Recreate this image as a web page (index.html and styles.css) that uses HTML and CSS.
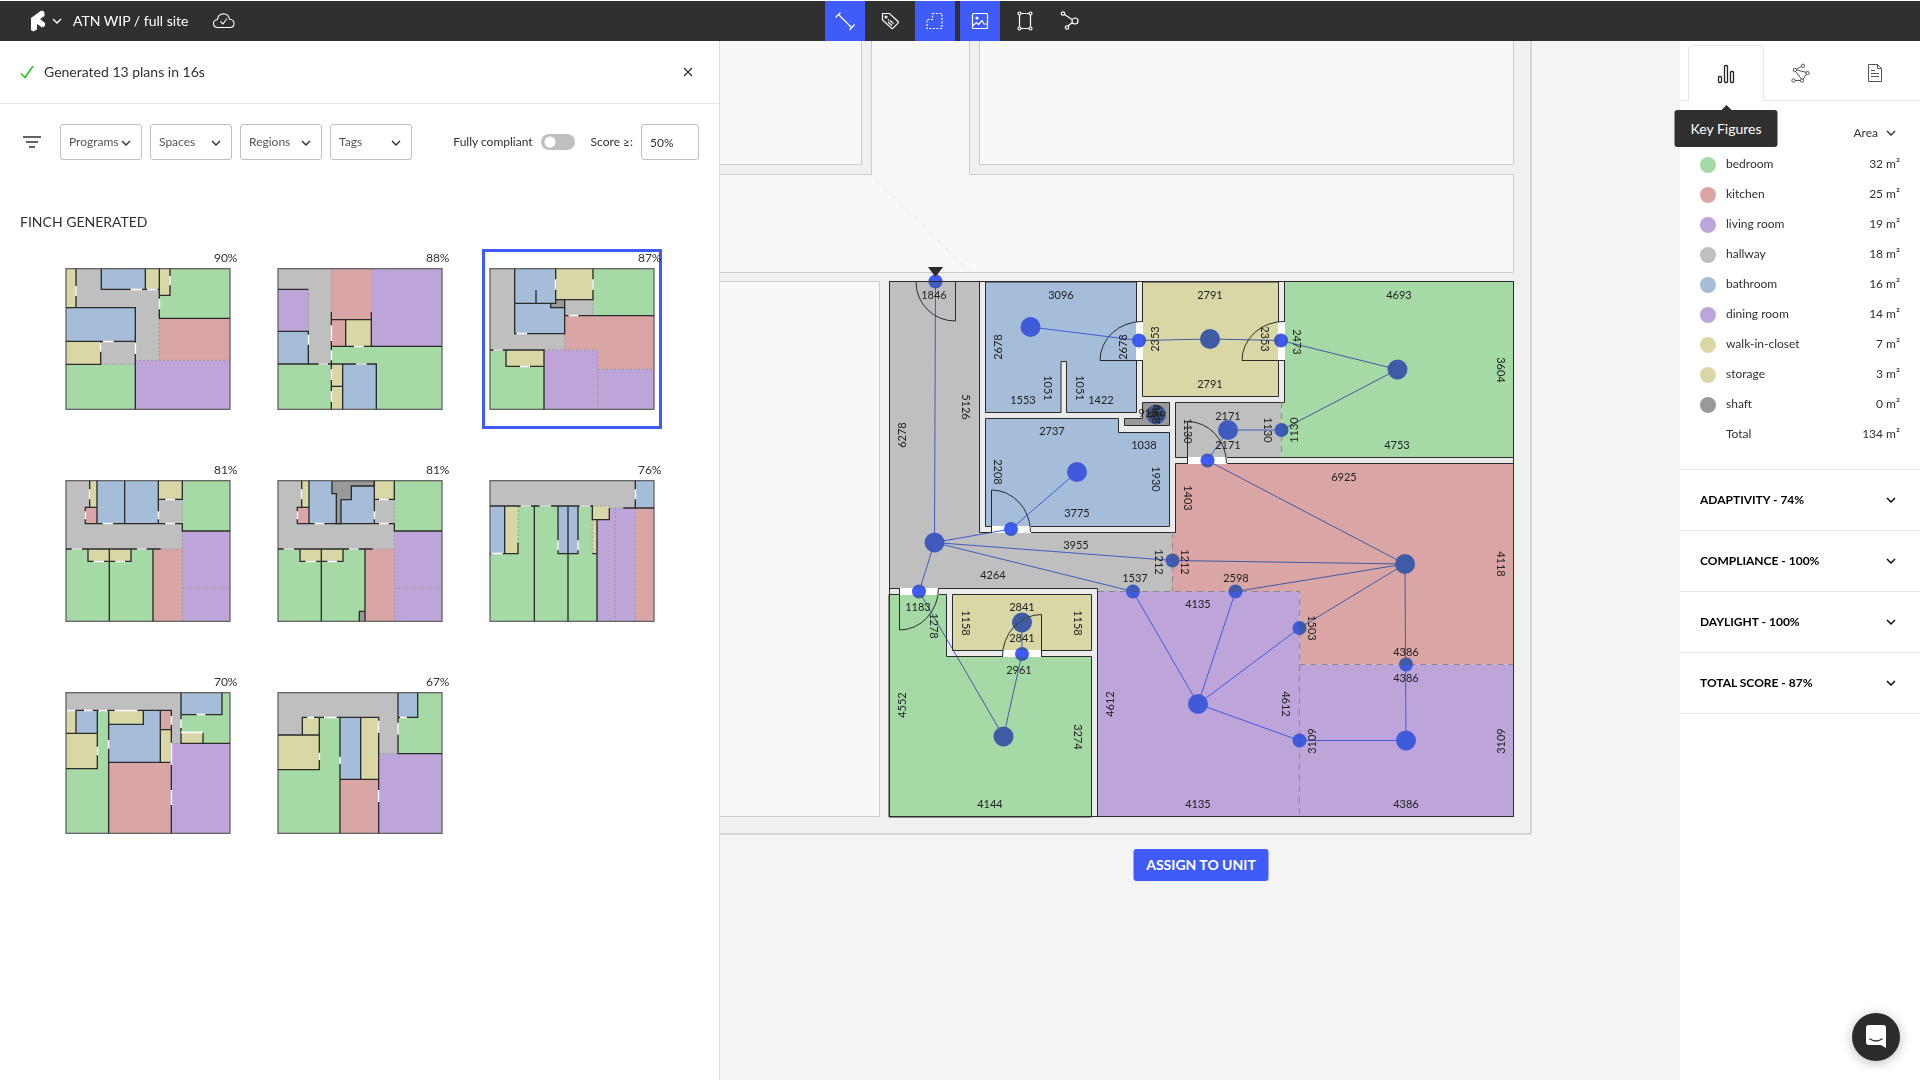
FILE: index.html
```html
<!DOCTYPE html>
<html lang="en">
<head>
<meta charset="utf-8">
<meta name="viewport" content="width=device-width, initial-scale=1">
<title>ATN WIP / full site</title>
<link rel="stylesheet" href="styles.css">
</head>
<body>
<svg class="defs" aria-hidden="true">
  <symbol id="chevron" viewBox="0 0 10 10"><path d="M1 3l4 4 4-4" fill="none" stroke="currentColor" stroke-width="1.4"/></symbol>
</svg>
<header class="topbar">
  <div class="brand">
    <button class="logo" type="button" aria-label="Main menu">
      <svg width="16" height="22" viewBox="0 0 16 22"><path d="M1 8L11 .8Q14 0 14.500 3V6L10 9l5 4v3l-3 1.500-5-3.500v5.500L3.500 21.500 1 20z" fill="#fff"/></svg>
      <svg width="10" height="10"><use href="#chevron"/></svg>
    </button>
    <span class="project">ATN WIP / full site</span>
    <svg width="24" height="18" viewBox="0 0 24 18" fill="none" stroke="#fff" stroke-width="1.1"><path d="M6 15.500Q1.500 15.500 1.500 11.500 1.500 8 5.500 7.500 6 2 11.500 1.800 16.500 2 17.500 7.200 22 7.500 22 11.500 22 15.500 18 15.500z"/><path d="M8.500 9.500l2.500 2.500 4-5.500"/></svg>
  </div>
  <nav class="tools">
    <button class="tool on" type="button" aria-label="Measurements"><svg width="22" height="22" viewBox="0 0 22 22"><path d="M4.500 4.500l13 13M1.500 7.500l5-5M15.500 20l5-5.500"/></svg></button>
    <button class="tool" type="button" aria-label="Labels"><svg width="22" height="22" viewBox="0 0 22 22"><path d="M3.500 3.500h7l8.500 8q.8.800 0 1.600l-5 5q-.8.800-1.600 0L3.500 10z"/><circle cx="7" cy="7" r="1"/><path d="M9 12l4 3.500M11 10.500l3.500 3M9 9.500l1 1"/></svg></button>
    <button class="tool on" type="button" aria-label="Outlines"><svg width="22" height="22" viewBox="0 0 22 22"><path d="M8.500 3.500h9.500v15H3v-9h5.500z" stroke-dasharray="2 1.500"/></svg></button>
    <button class="tool on" type="button" aria-label="Image"><svg width="22" height="22" viewBox="0 0 22 22"><rect x="3.500" y="3.500" width="15" height="15" rx="1"/><circle cx="8" cy="8" r="1" fill="#fff"/><path d="M3.500 16l4-3.500 2 2 3.500-4 2 3.500 3.500 0"/></svg></button>
    <button class="tool" type="button" aria-label="Frame"><svg width="22" height="22" viewBox="0 0 22 22"><path d="M7 3.500h8M7 18.500h8M5.500 5v12M16.500 5v12"/><circle cx="5.500" cy="3.500" r="1.500"/><circle cx="16.500" cy="3.500" r="1.500"/><circle cx="5.500" cy="18.500" r="1.500"/><circle cx="16.500" cy="18.500" r="1.500"/></svg></button>
    <button class="tool" type="button" aria-label="Graph"><svg width="22" height="22" viewBox="0 0 22 22"><path d="M5.500 4.500l7.500 5M9 16l5-4"/><circle cx="4" cy="3.500" r="1.700"/><circle cx="16" cy="11" r="3"/><circle cx="8" cy="17.500" r="1.700"/></svg></button>
  </nav>
</header>
<div class="workspace">
  <section class="results">
    <div class="status">
      <svg width="14" height="14" viewBox="0 0 14 14"><path d="M1 8.500l4 4L13 1" fill="none" stroke="#1fc41f" stroke-width="1.500"/></svg>
      <p>Generated 13 plans in 16s</p>
      <button class="close" type="button" aria-label="Close"><svg width="10" height="10" viewBox="0 0 10 10"><path d="M1 1l8 8M9 1l-8 8" stroke="#303030" stroke-width="1.200"/></svg></button>
    </div>
    <form class="filters">
      <svg class="filter-icon" width="20" height="14" viewBox="0 0 20 14"><path d="M1 2h18M4 7h12M7 12h6" stroke="#303030" stroke-width="1.400"/></svg>
      <div class="picker"><select aria-label="Programs"><option>Programs</option></select><svg><use href="#chevron"/></svg></div>
      <div class="picker"><select aria-label="Spaces"><option>Spaces</option></select><svg><use href="#chevron"/></svg></div>
      <div class="picker"><select aria-label="Regions"><option>Regions</option></select><svg><use href="#chevron"/></svg></div>
      <div class="picker"><select aria-label="Tags"><option>Tags</option></select><svg><use href="#chevron"/></svg></div>
      <label class="compliant">Fully compliant <input class="switch" type="checkbox"></label>
      <label class="score">Score ≥: <input type="text" value="50%"></label>
    </form>
    <h2>FINCH GENERATED</h2>
    <div class="plans">
      <button class="plan" type="button"><span>90%</span>
        <svg viewBox="-3 -2 498 426"><rect class="hall" width="492" height="422"/><rect class="closet" width="30" height="117"/><rect class="bath" x="106" width="132" height="62"/><rect class="closet" x="238" width="42" height="62"/><rect class="bed" x="280" width="212" height="149"/><rect class="closet" x="280" width="32" height="80"/><rect class="kitchen" x="280" y="149" width="212" height="126"/><rect class="living" x="208" y="275" width="284" height="147"/><rect class="bath" y="117" width="208" height="101"/><rect class="closet" y="218" width="104" height="69"/><rect class="bed" y="287" width="208" height="135"/>
        <path class="open" d="M280 149V275M208 275H492M104 287H208"/><rect class="edge" width="492" height="422"/><path class="wall" d="M30 0V117M106 0V62H280M238 0V62M280 0V149H492M280 80H312V0M0 117H208V422M0 218H208M104 218V287H0"/><path class="door" d="M30 52V82M194 62H228M244 62H274M312 22V50M280 90V122M111 218H143M104 222V249M208 222V256"/></svg></button>
      <button class="plan" type="button"><span>88%</span>
        <svg viewBox="-3 -2 498 426"><rect class="hall" width="492" height="422"/><rect class="living" y="62" width="91" height="126"/><rect class="bath" y="188" width="91" height="98"/><rect class="bed" y="286" width="160" height="136"/><rect class="kitchen" x="160" width="120" height="153"/><rect class="living" x="280" width="212" height="233"/><rect class="kitchen" x="160" y="153" width="43" height="80"/><rect class="closet" x="203" y="153" width="77" height="80"/><rect class="bed" x="160" y="233" width="332" height="189"/><rect class="closet" x="160" y="286" width="34" height="136"/><rect class="bath" x="194" y="286" width="101" height="136"/>
        <path class="open" d="M91 62V188M160 0V130M280 0V130"/><rect class="edge" width="492" height="422"/><path class="wall" d="M0 62H91M0 188H91V286M0 286H160M160 130V422M160 153H280M203 153V233M280 130V233M160 233H492M160 286H295V422M194 286V422M160 353H194"/><path class="door" d="M91 198V228M122 286H150M160 170V217M228 233H257M160 245V275M234 286H266M160 302V334M160 367V399"/></svg></button>
      <button class="plan selected" type="button" aria-pressed="true"><span>87%</span>
        <svg viewBox="-3 -2 498 426"><rect class="hall" width="492" height="422"/><rect class="bath" x="74" width="123" height="104"/><rect class="closet" x="197" width="112" height="93"/><rect class="bed" x="309" width="183" height="141"/><rect class="bath" x="74" y="104" width="150" height="91"/><path class="shaft" d="M197 93H224V117H182V104H197z"/><path class="kitchen" d="M224 141H492V302H323V244H224z"/><path class="living" d="M162 244H323V302H492V422H162z"/><rect class="bed" y="244" width="162" height="178"/><rect class="closet" x="48" y="244" width="114" height="49"/>
        <path class="open" d="M309 93V141M224 195V244M162 244H323V422M323 302H492"/><rect class="edge" width="492" height="422"/><path class="wall" d="M74 0V195H224V93M197 0V104H74M138 64V104M197 93H309V0M182 104V117H224M224 141H492M0 244H162V422M48 244V293H162"/><path class="door" d="M197 32V63M309 32V63M236 141H265M80 195H111M10 244H38M90 293H120"/></svg></button>
      <button class="plan" type="button"><span>81%</span>
        <svg viewBox="-3 -2 498 426"><rect class="hall" width="492" height="422"/><rect class="closet" x="71" width="22" height="80"/><rect class="kitchen" x="58" y="80" width="35" height="49"/><rect class="bath" x="93" width="184" height="129"/><rect class="closet" x="277" width="72" height="56"/><rect class="bed" x="349" width="143" height="151"/><rect class="living" x="349" y="151" width="143" height="271"/><rect class="kitchen" x="261" y="205" width="88" height="217"/><rect class="bed" y="205" width="261" height="217"/><rect class="closet" x="66" y="205" width="129" height="37"/>
        <path class="open" d="M349 56V129M349 151V422M284 205H349M349 323H492"/><rect class="edge" width="492" height="422"/><path class="wall" d="M71 0V80M93 0V129M93 80H58V129H349V151H492M176 0V129M277 0V129M277 56H349V0M0 205H284M66 205V242H195V205M130 205V422M261 205V422"/><path class="door" d="M71 26V56M58 92V116M110 129H141M298 56H327M277 92V116M298 129H327M17 205H48M213 205H242M83 242H114M148 242H177"/></svg></button>
      <button class="plan" type="button"><span>81%</span>
        <svg viewBox="-3 -2 498 426"><rect class="hall" width="492" height="422"/><rect class="closet" x="71" width="22" height="80"/><rect class="kitchen" x="58" y="80" width="35" height="49"/><rect class="bath" x="93" width="196" height="129"/><path class="shaft wall" d="M162 0H289V16H220V57H189V129H175V39H162z"/><rect class="closet" x="289" width="60" height="56"/><rect class="bed" x="349" width="143" height="151"/><rect class="living" x="349" y="151" width="143" height="271"/><rect class="kitchen" x="261" y="205" width="88" height="217"/><rect class="bed" y="205" width="261" height="217"/><rect class="closet" x="66" y="205" width="129" height="37"/><rect class="shaft" x="244" y="392" width="17" height="30"/>
        <path class="open" d="M349 56V129M349 151V422M284 205H349M349 323H492"/><rect class="edge" width="492" height="422"/><path class="wall" d="M71 0V80M93 0V129M93 80H58V129H349V151H492M289 0V129M289 56H349V0M0 205H284M66 205V242H195V205M130 205V422M261 205V422M244 422V392H261"/><path class="door" d="M71 26V56M58 92V116M110 129H139M303 56H332M289 92V116M303 129H332M17 205H48M213 205H242M83 242H114M148 242H177"/></svg></button>
      <button class="plan" type="button"><span>76%</span>
        <svg viewBox="-3 -2 498 426"><rect class="hall" width="492" height="422"/><rect class="bath" x="436" width="56" height="82"/><rect class="bed" y="76" width="321" height="346"/><rect class="bath" y="76" width="44" height="143"/><rect class="closet" x="44" y="76" width="40" height="143"/><rect class="bath" x="204" y="76" width="60" height="143"/><rect class="closet" x="307" y="117" width="14" height="102"/><rect class="living" x="321" y="82" width="115" height="340"/><rect class="closet" x="307" y="76" width="51" height="41"/><rect class="kitchen" x="436" y="82" width="56" height="340"/>
        <path class="open" d="M84 76V186M307 76H358V82H400M307 117V219M376 82V422M436 82V422"/><rect class="edge" width="492" height="422"/><path class="wall" d="M0 76H307V117H358V82M436 0V82M400 82H492M44 76V219M0 219H84V186M133 76V422M204 76V219H264V76M234 76V422M321 117V422M307 219H321"/><path class="door" d="M92 76H123M149 76H183M269 76H301M436 26V56M4 219H38M204 179V209M264 179V209"/></svg></button>
      <button class="plan" type="button"><span>70%</span>
        <svg viewBox="-3 -2 498 426"><rect class="hall" width="492" height="422"/><rect class="bed" y="53" width="128" height="369"/><rect class="closet" y="53" width="30" height="69"/><rect class="bath" x="30" y="53" width="64" height="69"/><rect class="closet" y="122" width="94" height="106"/><rect class="bath" x="128" y="53" width="155" height="156"/><rect class="closet" x="128" y="53" width="104" height="42"/><rect class="kitchen" x="283" y="53" width="33" height="58"/><rect class="closet" x="283" y="111" width="33" height="98"/><rect class="kitchen" x="128" y="209" width="188" height="213"/><rect class="living" x="316" y="152" width="176" height="270"/><rect class="bed" x="345" width="147" height="152"/><rect class="bath" x="345" width="123" height="66"/><rect class="closet" x="345" y="119" width="66" height="33"/>
        <path class="open" d="M316 152H345"/><rect class="edge" width="492" height="422"/><path class="wall" d="M0 53H316V422M30 53V122M94 53V228H0M0 122H94M128 53V422M232 53V95H128M283 53V209M283 111H316M128 209H316M345 0V152H492M345 66H468V0M411 119V152"/><path class="door" d="M2 53H28M54 53H80M98 53H124M146 53H214M94 162V188M128 142V168M316 70V96M345 80V106M392 66H418M345 119H411M316 150V216M316 292V337"/></svg></button>
      <button class="plan" type="button"><span>67%</span>
        <svg viewBox="-3 -2 498 426"><rect class="hall" width="492" height="422"/><path class="bed" d="M0 127H124V74H186V422H0z"/><rect class="closet" x="73" y="74" width="51" height="53"/><rect class="closet" y="127" width="124" height="104"/><rect class="bath" x="186" y="74" width="62" height="186"/><rect class="closet" x="248" y="74" width="54" height="186"/><rect class="kitchen" x="186" y="260" width="116" height="162"/><rect class="living" x="302" y="183" width="190" height="239"/><rect class="bed" x="360" width="132" height="183"/><rect class="bath" x="360" width="59" height="74"/>
        <path class="open" d="M302 183H360"/><rect class="edge" width="492" height="422"/><path class="wall" d="M0 127H124M73 127V74H302V422M124 74V231H0M186 74V422M248 74V260M186 260H302M360 0V183H492M360 74H419V0"/><path class="door" d="M88 74H108M138 74H176M124 180V202M186 192V214M302 84V120M302 292V328M360 90V126M366 74H386"/></svg></button>
    </div>
  </section>

  <main class="canvas">
    <svg class="drawing" viewBox="720 41 960 1039" preserveAspectRatio="xMidYMin slice">
      <g class="site">
        <path class="shell" d="M700 20H1531V834H700z"/>
        <path class="void" d="M700 20H861.500V164.500H700zM979.500 20H1513.500V164.500H979.500zM700 281.500H879.500V816.500H700z"/>
        <path class="void" d="M700 174.500H871.500V20H969.500V174.500H1513.500V272.500H700z"/>
        <path class="axis" d="M875 178L970 272"/>
      </g>
      <g class="unit">
        <rect class="walls" x="889" y="282" width="625" height="535"/>
        <g class="outlined">
          <path class="bath" d="M985.500 282V412.500H1061V361.500H1066.500V412.500H1136.500V282z"/>
          <path class="bath" d="M985.500 418.500H1118.500V432.500H1169.500V526.500H985.500z"/>
          <path class="closet" d="M1142.500 282H1278.500V396.500H1142.500z"/>
          <path class="shaft" d="M1142.500 402.500H1169.500V425.500H1124.500V418.500H1142.500z"/>
          <path class="closet" d="M952.500 594.500H1091.500V650.500H952.500z"/>
          <path class="bed" d="M889 594.500H946.500V656.500H1091.500V817H889z"/>
        </g>
        <path class="hall" d="M889 282H979V532H1172V591H1098V588H889zM1175 402H1281.500V457H1175z"/>
        <path class="bed" d="M1285 282H1514V457H1281.500V402H1285z"/>
        <path class="kitchen" d="M1175 463H1514V664.500H1299.500V591H1172V532H1175z"/>
        <path class="living" d="M1098 591H1299.500V664.500H1514V817H1098z"/>
        <path class="line" d="M979.500 282V532.500H1175.500V463.500H1514M1281.500 402.500H1175.500V457.500H1514M1284.500 282V402.500H1281.500M889 588.500H1097.500V817"/>
        <path class="dash" d="M1281.500 402V457M1172.500 532V591M1098 591.500H1299.500V817M1299.500 664.500H1514"/>
        <path class="opening" d="M1136 322H1143V360H1136zM1278 322H1285V360H1278zM992 526H1031V533H992zM1188 457H1227V464H1188zM900 588H939V595H900zM1003 650H1042V657H1003z"/>
        <rect class="line" x="889.500" y="281.500" width="624" height="535"/>
        <path class="line" d="M955.500 282V321A39 39 0 0 1 916 282M1142 360.500H1100A42 39 0 0 1 1142 321.500M1285 360.500H1242A42 39 0 0 1 1285 321.500M991.500 532V490A39 42 0 0 1 1030.500 532M1187.500 463V421.500A39 42 0 0 1 1226.500 463M899.500 588V630A39 42 0 0 0 938.500 588M1041.500 657V614.500A39 42 0 0 0 1002.500 657"/>
      </g>
      <path d="M928 267H943L935.500 277z" fill="#2b2b2b"/>
      <g class="graph">
        <path d="M935.500 281.500L934.500 542.500L1011 529L1077 472M934.500 542.500L1172.500 560.500L1405 564M934.500 542.500L1133 591.500L1198 704L1235.500 591.500L1405 564L1207.500 460.500L1228 430H1281.500L1397.500 369.500L1281 340.500L1210 339L1139 340.500L1030.500 327M934.500 542.500L919 591.500L1003.500 736.500L1022 654V622.500M1198 704L1299.500 628L1405 564L1406 740.500H1299.500L1198 704"/>
        <g class="rooms"><circle cx="1030.500" cy="327"/><circle cx="1210" cy="339"/><circle cx="1397.500" cy="369.500"/><circle cx="1156" cy="414.500"/><circle cx="1228" cy="430"/><circle cx="1077" cy="472"/><circle cx="934.500" cy="542.500"/><circle cx="1405" cy="564"/><circle cx="1022" cy="622.500"/><circle cx="1003.500" cy="736.500"/><circle cx="1198" cy="704"/><circle cx="1406" cy="740.500"/></g>
        <g class="links"><circle cx="935.500" cy="281.500"/><circle cx="1139" cy="340.500"/><circle cx="1281" cy="340.500"/><circle cx="1281.500" cy="430"/><circle cx="1207.500" cy="460.500"/><circle cx="1011" cy="529"/><circle cx="1172.500" cy="560.500"/><circle cx="1133" cy="591.500"/><circle cx="1235.500" cy="591.500"/><circle cx="1299.500" cy="628"/><circle cx="1406" cy="664.500"/><circle cx="1299.500" cy="740.500"/><circle cx="919" cy="591.500"/><circle cx="1022" cy="654"/></g>
      </g>
      <g class="dims">
        <text x="934" y="299">1846</text><text x="1061" y="299">3096</text><text x="1023" y="404">1553</text><text x="1101" y="404">1422</text><text x="1052" y="435">2737</text><text x="1144" y="449">1038</text><text x="1077" y="517">3775</text><text x="1076" y="549">3955</text><text x="993" y="579">4264</text><text x="1135" y="582">1537</text><text x="1210" y="299">2791</text><text x="1210" y="388">2791</text><text x="1399" y="299">4693</text><text x="1397" y="449">4753</text><text x="1228" y="420">2171</text><text x="1228" y="449">2171</text><text x="1344" y="481">6925</text><text x="1236" y="582">2598</text><text x="1198" y="608">4135</text><text x="918" y="611">1183</text><text x="1022" y="611">2841</text><text x="1022" y="642">2841</text><text x="1019" y="674">2961</text><text x="990" y="808">4144</text><text x="1198" y="808">4135</text><text x="1406" y="656">4386</text><text x="1406" y="682">4386</text><text x="1406" y="808">4386</text><text x="1148" y="417">918</text><text x="1156" y="419">489</text>
        <g class="up"><text transform="translate(1002 347) rotate(-90)">2678</text><text transform="translate(906 435) rotate(-90)">6278</text><text transform="translate(1127 347) rotate(-90)">2678</text><text transform="translate(1159 339) rotate(-90)">2353</text><text transform="translate(906 705) rotate(-90)">4552</text><text transform="translate(1114 704) rotate(-90)">4612</text><text transform="translate(1316 741) rotate(-90)">3109</text><text transform="translate(1505 741) rotate(-90)">3109</text><text transform="translate(1298 430) rotate(-90)">1130</text><text transform="translate(1162 414) rotate(-90)">489</text></g>
        <g class="down"><text transform="translate(962 407) rotate(90)">5126</text><text transform="translate(1044 388) rotate(90)">1051</text><text transform="translate(1076 388) rotate(90)">1051</text><text transform="translate(994 472) rotate(90)">2208</text><text transform="translate(1152 479) rotate(90)">1930</text><text transform="translate(1184 498) rotate(90)">1403</text><text transform="translate(1184 431) rotate(90)">1130</text><text transform="translate(1264 430) rotate(90)">1130</text><text transform="translate(1261 339) rotate(90)">2353</text><text transform="translate(1293 342) rotate(90)">2473</text><text transform="translate(1497 370) rotate(90)">3604</text><text transform="translate(1497 564) rotate(90)">4118</text><text transform="translate(1155 562) rotate(90)">1212</text><text transform="translate(1181 562) rotate(90)">1212</text><text transform="translate(1308 628) rotate(90)">1503</text><text transform="translate(1282 704) rotate(90)">4612</text><text transform="translate(930 626) rotate(90)">1278</text><text transform="translate(962 623) rotate(90)">1158</text><text transform="translate(1074 623) rotate(90)">1158</text><text transform="translate(1074 737) rotate(90)">3274</text><text transform="translate(1152 414) rotate(90)">463</text></g>
      </g>
    </svg>
    <button class="assign" type="button">ASSIGN TO UNIT</button>
  </main>

  <aside class="figures">
    <div class="tabs">
      <button class="tab active" type="button" aria-label="Key Figures"><svg width="18" height="20" viewBox="0 0 18 20"><rect x="1.500" y="12.500" width="3" height="6" rx="1"/><rect x="7.500" y="1.500" width="3" height="17" rx="1"/><rect x="13.500" y="7.500" width="3" height="11" rx="1"/></svg><span class="tip">Key Figures</span></button>
      <button class="tab" type="button" aria-label="Graph"><svg width="20" height="20" viewBox="0 0 20 20"><path d="M10.500 3.500L5 6.500M5.500 7l10.500 2.500M4.500 8.500l6 7.500M15.500 11l-3.500 5.500M4 17.500h6"/><circle cx="12" cy="2.800" r="1.700"/><circle cx="3.800" cy="7" r="1.700"/><circle cx="16.500" cy="10" r="1.700"/><circle cx="2.500" cy="17.500" r="1.700"/><circle cx="11" cy="17.500" r="1.700"/></svg></button>
      <button class="tab" type="button" aria-label="Report"><svg width="16" height="20" viewBox="0 0 16 20"><path d="M1.500 1.500h9l4 4v13h-13zM10.500 1.500v4h4M4 7.500h4M4 10.500h8M4 13.500h8"/></svg></button>
    </div>
    <div class="legend">
      <button class="area" type="button">Area <svg width="10" height="10"><use href="#chevron"/></svg></button>
      <table>
        <tbody>
        <tr><th scope="row"><i class="bed"></i>bedroom</th><td>32 m²</td></tr>
        <tr><th scope="row"><i class="kitchen"></i>kitchen</th><td>25 m²</td></tr>
        <tr><th scope="row"><i class="living"></i>living room</th><td>19 m²</td></tr>
        <tr><th scope="row"><i class="hall"></i>hallway</th><td>18 m²</td></tr>
        <tr><th scope="row"><i class="bath"></i>bathroom</th><td>16 m²</td></tr>
        <tr><th scope="row"><i class="living"></i>dining room</th><td>14 m²</td></tr>
        <tr><th scope="row"><i class="closet"></i>walk-in-closet</th><td>7 m²</td></tr>
        <tr><th scope="row"><i class="closet"></i>storage</th><td>3 m²</td></tr>
        <tr><th scope="row"><i class="shaft"></i>shaft</th><td>0 m²</td></tr>
        <tr><th scope="row"><i></i>Total</th><td>134 m²</td></tr>
        </tbody>
      </table>
    </div>
    <button class="metric" type="button" aria-expanded="false">ADAPTIVITY - 74% <svg width="10" height="10"><use href="#chevron"/></svg></button>
    <button class="metric" type="button" aria-expanded="false">COMPLIANCE - 100% <svg width="10" height="10"><use href="#chevron"/></svg></button>
    <button class="metric" type="button" aria-expanded="false">DAYLIGHT - 100% <svg width="10" height="10"><use href="#chevron"/></svg></button>
    <button class="metric" type="button" aria-expanded="false">TOTAL SCORE - 87% <svg width="10" height="10"><use href="#chevron"/></svg></button>
  </aside>
</div>
<button class="chat" type="button" aria-label="Open chat"><svg width="24" height="26" viewBox="0 0 24 26"><path d="M5 1h14q3 0 3 3v20l-5-3H5q-3 0-3-3V4q0-3 3-3z" fill="#fff"/><path d="M6 15q6 4 12 0" fill="none" stroke="#2b2b2b" stroke-width="1.500" stroke-linecap="round"/></svg></button>
</body>
</html>
```
FILE: styles.css
```css
:root {
  --ink: #303030;
  --accent: #3f5bfa;
  --rule: #e6e6e6;
}

* { box-sizing: border-box; }

body {
  margin: 0;
  min-height: 100vh;
  display: flex;
  flex-direction: column;
  background: #fff;
  color: var(--ink);
  font: 12px/18px Lato, "Liberation Sans", sans-serif;
}

button, input, select {
  font: inherit;
  color: inherit;
}

button {
  padding: 0;
  border: 0;
  background: none;
  cursor: pointer;
}

svg { display: block; }
.defs { position: absolute; width: 0; height: 0; }

/* Room colours, shared by drawings and legend */
.bed { fill: #a5d9a5; background: #a5d9a5; }
.kitchen { fill: #d9a5a5; background: #d9a5a5; }
.living { fill: #bda5d9; background: #bda5d9; }
.hall { fill: #bfbfbf; background: #bfbfbf; }
.bath { fill: #a5bdd9; background: #a5bdd9; }
.closet { fill: #d9d7a5; background: #d9d7a5; }
.shaft { fill: #999; background: #999; }

/* Top bar */
.topbar {
  display: grid;
  grid-template-columns: 1fr auto 1fr;
  align-items: center;
  height: 40px;
  margin-top: 1px;
  padding-right: 5px;
  background: var(--ink);
  color: #fff;
}

.brand {
  display: flex;
  align-items: center;
  padding-left: 30px;
}

.logo {
  display: flex;
  align-items: center;
  gap: 6px;
  margin-right: 11px;
}

.project {
  margin-right: 24px;
  font-size: 14px;
}

.tools { display: flex; gap: 5px; }

.tool {
  display: grid;
  place-items: center;
  width: 40px;
  height: 40px;
}

.tool.on { background: var(--accent); }

.tool svg {
  fill: none;
  stroke: #fff;
  stroke-width: 1.2;
}

/* Workspace */
.workspace {
  flex: 1;
  display: flex;
  min-height: 0;
}

.results {
  width: 37.5%;
  min-width: 680px;
  border-right: 1px solid #ddd;
}

.status {
  display: flex;
  align-items: center;
  gap: 10px;
  height: 63px;
  padding: 0 26px 0 20px;
  border-bottom: 1px solid var(--rule);
  font-size: 14px;
}

.status p { flex: 1; margin: 0; }

.filters {
  display: flex;
  align-items: center;
  gap: 8px;
  padding: 20px 20px 0 22px;
}

.filter-icon { margin-right: 10px; }

.picker { position: relative; }

.picker select {
  appearance: none;
  width: 82px;
  height: 36px;
  padding: 0 8px;
  border: 1px solid #bfbfbf;
  border-radius: 3px;
  background: #fff;
  color: #555;
}

.picker svg {
  position: absolute;
  right: 11px;
  top: 14px;
  width: 10px;
  height: 10px;
  pointer-events: none;
}

.compliant, .score {
  display: flex;
  align-items: center;
  gap: 8px;
  white-space: nowrap;
}

.compliant { margin-left: auto; margin-right: 8px; }

.switch {
  appearance: none;
  width: 34px;
  height: 16px;
  margin: 0;
  border-radius: 8px;
  background: radial-gradient(circle at 9px 8px, #fff 5px, #bfbfbf 6px);
}

.score input {
  width: 58px;
  height: 36px;
  padding: 0 8px;
  border: 1px solid #bfbfbf;
  border-radius: 3px;
}

h2 {
  margin: 53px 20px 18px;
  font-size: 14px;
  line-height: 18px;
  font-weight: 400;
}

.plans {
  display: grid;
  grid-template-columns: repeat(3, 180px);
  justify-content: center;
  gap: 32px;
}

.plan {
  height: 180px;
  text-align: right;
  vertical-align: top;
  display: flex;
  flex-direction: column;
  align-items: stretch;
}

.plan span { height: 19px; }

.plan svg {
  width: 166px;
  height: 142px;
  margin-left: 7px;
}

.plan.selected { box-shadow: inset 0 0 0 3px var(--accent); }

.edge { fill: none; stroke: #666; stroke-width: 4; }
.wall { stroke: #2b2b2b; stroke-width: 4; }
.wall:not(.shaft) { fill: none; }
.door { stroke: #fff; stroke-width: 5; }
.open { fill: none; stroke: #999; stroke-width: 3; stroke-dasharray: 6 6; }

/* Drawing area */
.canvas {
  position: relative;
  flex: 1;
  min-width: 0;
  background: #f4f4f4;
}

.drawing {
  position: absolute;
  inset: 0;
  width: 100%;
  height: 100%;
}

.shell { fill: #f0f0f0; stroke: #bbb; }
.void { fill: #f8f8f8; stroke: #ccc; }
.axis { stroke: #e4e4e4; stroke-dasharray: 6 5; }
.walls { fill: #ebebeb; }
.outlined { stroke: #2b2b2b; }
.line { fill: none; stroke: #2b2b2b; }
.dash { fill: none; stroke: #888; stroke-dasharray: 6 5; }
.opening { fill: #fff; }

.graph {
  mix-blend-mode: darken;
  fill: none;
  stroke: var(--accent);
}

.graph circle { fill: var(--accent); stroke: none; }
.rooms circle { r: 10px; }
.links circle { r: 7px; }

.dims {
  font-size: 11px;
  fill: #222;
  text-anchor: middle;
}

.assign {
  position: absolute;
  top: 808px;
  left: 50%;
  transform: translateX(-50%);
  margin-left: 1px;
  width: 135px;
  height: 32px;
  border-radius: 3px;
  background: var(--accent);
  color: #fff;
  font-size: 14px;
  font-weight: 700;
  white-space: nowrap;
}

/* Key figures */
.figures { width: 240px; }

.tabs {
  display: flex;
  height: 60px;
  padding: 4px 8px 0;
  box-shadow: inset 0 -1px var(--rule);
}

.tab {
  position: relative;
  flex: 1;
  display: grid;
  place-items: center;
}

.tab svg { fill: none; stroke: #555; }

.tab.active {
  border: 1px solid var(--rule);
  border-bottom: 0;
  border-radius: 4px 4px 0 0;
  background: #fff;
}

.tab.active svg { stroke: #222; stroke-width: 1.3; }

.tip {
  position: absolute;
  top: 64px;
  left: 50%;
  transform: translateX(-50%);
  padding: 9px 16px;
  border-radius: 3px;
  background: var(--ink);
  color: #fff;
  font-size: 14px;
  line-height: 19px;
  white-space: nowrap;
}

.tip::before {
  content: "";
  position: absolute;
  left: 50%;
  top: -5px;
  margin-left: -6px;
  border: 6px solid transparent;
  border-top: 0;
  border-bottom-color: var(--ink);
}

.legend { padding: 23px 20px 20px; }

.area {
  display: flex;
  align-items: center;
  gap: 8px;
  margin: 0 4px 0 auto;
}

table {
  width: 100%;
  margin-top: 7px;
  border-collapse: collapse;
}

th, td {
  height: 30px;
  padding: 0;
  text-align: left;
  font-weight: 400;
}

td { text-align: right; }

th i {
  display: inline-block;
  width: 16px;
  height: 16px;
  margin-right: 10px;
  border-radius: 50%;
  vertical-align: middle;
}

.metric {
  display: flex;
  align-items: center;
  justify-content: space-between;
  width: 100%;
  height: 61px;
  padding: 0 24px 0 20px;
  border-top: 1px solid var(--rule);
  color: #000;
  font-weight: 700;
}

.metric:last-child {
  height: 62px;
  border-bottom: 1px solid var(--rule);
}

.chat {
  position: fixed;
  right: 20px;
  bottom: 19px;
  display: grid;
  place-items: center;
  width: 48px;
  height: 48px;
  border-radius: 50%;
  background: #2b2b2b;
  box-shadow: 0 2px 12px #0004;
}
```
